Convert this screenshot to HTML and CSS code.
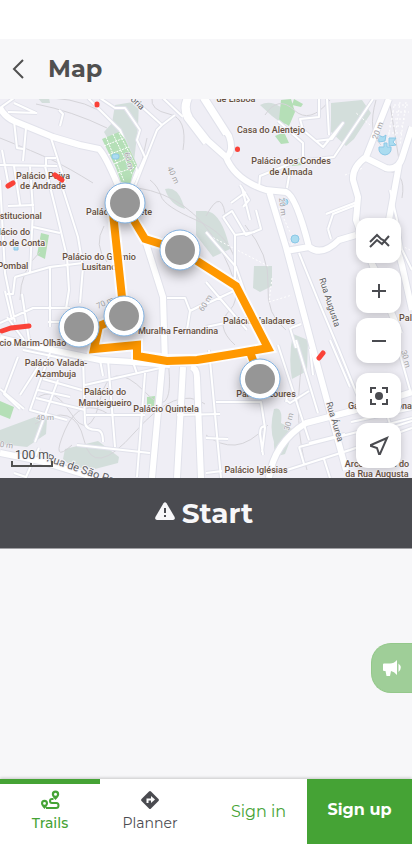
FILE: index.html
```html
<!DOCTYPE html>
<html lang="en">
<head>
<meta charset="utf-8">
<meta name="viewport" content="width=device-width, initial-scale=1">
<title>Map</title>
<link rel="stylesheet" href="styles.css">
</head>
<body>
<header class="header">
  <button class="back" aria-label="Back"><svg viewBox="0 0 12 20" width="12" height="20"><path d="M11 1 2 10l9 9"/></svg></button>
  <h1>Map</h1>
</header>
<main>
  <section class="map">
    <svg class="canvas" viewBox="0 99 412 379" role="img" aria-label="Trail map">
      <defs>
        <g id="minor">
          <path d="M0 108 14 98M8 112 37 113M14 103 36 113M59 110 63 114 60 126M14 121 17 148 23 149M26 128 23 161M51 138 65 182M0 165 57 166M46 166V158H56M14 166 20 205M30 166 33 210 30 273M2 150 8 182M45 166 57 215 67 257 69 290 66 309M60 180 78 237 83 267 80 303M0 180 5 273 15 322M8 206 34 205M33 227 60 233M15 277 50 267 83 263M15 277 13 294 7 294M50 267V327M0 323 33 308 70 308M22 294 29 340M5 291 12 320M48 322H80"/>
          <path d="M88 98 120 130 137 170 130 188M100 98 115 108H125L140 130 137 140 145 157 132 186M132 98 162 125 175 115M162 125 157 130 135 186M163 98 183 117M120 190 145 240M167 298H185L190 311 206 303M190 311 187 330M206 232 236 267 244 290M223 217 235 235 255 232M223 217 232 211 246 235 261 229 256 210M235 235V279M206 282 247 330M206 304 236 290M206 327 225 323"/>
          <path d="M373 99 334 157 297 161 260 176 259 188M319 99V117L300 119 303 130 323 147 343 123 332 139 316 141M327 99 329 135M278 121 303 143V159M290 170 287 188M242 188 250 220M246 192 231 203M240 185 249 200 243 207M328 229 333 214 356 205M328 229 331 239M326 214 357 202M299 253 318 300 339 350 360 402M390 190 397 220 402 250M366 250 385 283M395 235 412 270"/>
          <path d="M83 357 85 423Q86 430 97 430 103 430 103 442M108 360 115 447M145 373 137 477M77 445 150 453M85 385 160 368M36 398 85 410M86 415H145M50 353 30 410 67 420M58 380 35 442M18 357 4 394 20 409M20 395 43 359M38 390 70 397M43 379 82 390M23 350 85 363M133 362 137 374M100 360 103 376M7 317 24 340M0 389 24 409M14 473 26 477 39 448"/>
          <path d="M209 350 221 478M216 402H261L265 428 262 452M265 427Q260 425 260 434L263 455M278 345 309 440M296 340 318 413M286 400 290 403 309 391M286 402 287 396M299 447 412 418M287 470 350 450 412 428M299 447 304 464M324 459 330 478M309 443 345 434M310 349 313 375M290 328 296 348M291 328 301 324M206 438 228 439M206 473 222 471M384 430 412 421M351 422 412 409M384 405 395 440M177 415 220 414M330 340 350 387M397 344 410 390"/>
        </g>
        <g id="major">
          <path d="M0 108Q5 117 14 121L53 137 80 145 99 149Q105 155 117 183L124 203 145 240"/>
          <path d="M189 98Q184 108 190 118L208 141 226 157Q235 180 266 190L286 192Q296 196 309 247Q322 257 339 240L356 235M187 98Q182 108 187 118L206 143M206 100 229 136Q234 150 227 157M203 98 226 134M269 191 286 247 316 360 346 470M286 251 309 247"/>
          <path d="M389 99 366 157Q352 167 353 180L358 197 356 220 378 280 400 334M366 158 386 168Q399 171 403 155L412 127M399 165 389 220 402 265 412 310"/>
          <path d="M0 338 37 347 100 360 133 362 170 365M145 240 163 297 165 364M162 367 152 478M183 367 177 478M191 367Q197 368 197 378L201 478M0 453 40 461 96 478M269 478Q274 443 306 423L356 410 412 392"/>
        </g>
      </defs>
      <rect y="99" width="412" height="379" fill="#efeef5"/>
      <g class="woods">
        <path d="M115 105 139 101 138 127 133 170 117 155 104 132 112 123Z"/>
        <path d="M331 103 362 100 371 113 354 139 346 146 331 132ZM260 105Q275 97 292 118L284 125 272 116Z"/>
        <path d="M165 189Q176 186 182 201L185 209Q170 205 165 189ZM196 211H206Q219 212 227 238L230 249 213 257 196 235Z"/>
        <path d="M254 266H272V286L260 292 253 288ZM293 334 308 340 307 371 292 379Q288 358 293 334ZM274 409Q283 406 281 423L294 430 285 454Q273 459 274 442 269 428 274 409Z"/>
        <path d="M0 430 35 417 47 419 46 434 27 447 0 444ZM65 449 98 441 119 457 118 463 95 469 72 467 63 459ZM38 98H49L50 103 42 103Z"/>
      </g>
      <g class="parks"><path d="M281 100 291 99 295 112 289 126 279 120ZM294 99 303 104 301 107 292 105ZM275 136 284 132 289 143 281 144ZM290 161 299 158 302 165 292 166Z"/><path d="M41 233 49 235 45 259 37 255ZM0 401 14 407 10 419 0 415ZM147 397 155 396 154 408 147 407Z"/></g>
      <path class="contours" d="M52 98Q88 100 110 118M36 104Q72 111 107 128M0 138Q35 152 52 160T93 183M152 98Q150 110 169 114T183 150M147 138 140 170M150 180Q158 186 161 196T196 220 235 260 245 290M138 188Q190 196 218 245T230 310 235 345M245 225Q270 255 268 285T286 330M104 226Q93 245 107 262M40 252Q20 270 20 300M30 405Q50 380 70 412T100 400 145 392 165 340M35 424Q75 400 84 440T135 432 205 404M302 362Q293 425 307 470M206 435Q220 446 235 445T268 425M265 115Q278 95 294 110T330 100M376 100Q367 132 381 145M390 104 399 160M384 171Q407 170 402 198M206 216Q223 184 226 222M110 415Q80 395 65 430T72 445"/>
      <path class="dots" d="M389 126H404M391 119H407M392 112H409M394 105H410M388 133H402M394 106 388 140M400 102 394 143M406 102 400 145M206 234 270 267M272 278 269 302 292 295M279 208 290 232M282 236 294 246M355 222 410 250M345 175 363 168M370 125 355 112"/>
      <use href="#minor" class="minor-case"/><use href="#major" class="major-case"/>
      <use href="#minor" class="minor"/><use href="#major" class="major"/>
      <g class="parks"><path d="M102 139 119 132 125 139 137 165 133 173 130 184 121 182 116 168Z"/></g>
      <g class="stroll"><path d="M106 137 124 181M113 134 132 174M119 133 136 166M104 146 124 138M108 155 129 147M114 164 132 156M118 173 135 167"/></g>
      <g class="water"><circle cx="295" cy="239" r="4"/><circle cx="285" cy="202" r="3"/><rect x="112" y="154" width="7" height="5" rx="2"/><path d="M379 147H384V143H387V147H391Q392 154 385 155 378 154 379 147ZM378 135 383 137 386 135 385 141 379 142ZM389 138 396 138 393 142 396 145 389 146ZM14 245H18V250H14Z"/></g>

      <g class="roads-text">
        <text transform="translate(130 100) rotate(43)">ória</text>
        <text transform="translate(319 279) rotate(72)">Rua Augusta</text>
        <text transform="translate(326 403) rotate(73)">Rua Áurea</text>
        <text class="wide" transform="translate(46 461) rotate(19)">Rua de São Paulo</text>
      </g>
      <g class="elev">
        <text transform="translate(124 153) rotate(75)">60 m</text><text transform="translate(167 168) rotate(65)">40 m</text>
        <text transform="translate(377 140) rotate(-68)">20 m</text><text transform="translate(279 198) rotate(83)">20 m</text>
        <text transform="translate(203 312) rotate(-58)">60 m</text><text transform="translate(36 420)">40 m</text><text transform="translate(98 309) rotate(-25)">70 m</text>
        <text transform="translate(289 431) rotate(-75)">30 m</text><text transform="translate(401 351) rotate(75)">30 m</text><text transform="translate(-5 446) rotate(8)">20 m</text>
      </g>
      <g class="places">
        <text x="236" y="102">de Lisboa</text><text x="271" y="133">Casa do Alentejo</text>
        <text x="291" y="164">Palácio dos Condes</text><text x="291" y="175">de Almada</text>
        <text x="43" y="179">Palácio Paiva</text><text x="43" y="189">de Andrade</text>
        <text x="119" y="215">Palácio Alegrete</text>
        <text x="17" y="219">Institucional</text><text x="9" y="235">Palácio do</text><text x="8" y="246">Sobrinho de Conta</text><text x="13" y="269">Pombal</text>
        <text x="99" y="260">Palácio do Grémio</text><text x="99" y="270">Lusitano</text>
        <text x="178" y="334">Muralha Fernandina</text><text x="259" y="324">Palácio Valadares</text>
        <text x="24" y="346">Palácio Marim-Olhão</text><text x="56" y="366">Palácio Valada-</text><text x="56" y="377">Azambuja</text>
        <text x="105" y="395">Palácio do</text><text x="105" y="406">Manteigueiro</text><text x="166" y="412">Palácio Quintela</text>
        <text x="266" y="397">Palácio Loures</text><text x="256" y="473">Palácio Iglésias</text>
        <text x="381" y="409">Galeria Nacional</text><text x="377" y="467">Arco Triunfal do</text><text x="377" y="477">da Rua Augusta</text><text x="414" y="321">Palácio</text>
      </g>
      <g class="halo"><path d="M124 204 145 239 180 250 236 286 268 348 197 360H167L137 356V345L94 349 99 326 124 316 112 204M250 350 260 379"/></g>
      <g class="route"><path d="M124 204 145 239 180 250 236 286 268 348Q230 355 197 360L167 361 137 356V345L94 349 99 326 124 316 112 204M250 352 260 379"/></g>
      <path class="alerts" d="M97 104V105M237.500 149V149.500M8 186 13 183M55 175 62 180M2 331 11 328 29 326M319 358 323 353"/>
      <g class="markers">
        <g><circle class="rim" cx="260" cy="379" r="20"/><circle class="dot" cx="260" cy="379" r="15"/></g>
        <g><circle class="rim" cx="79" cy="327" r="20"/><circle class="dot" cx="79" cy="327" r="15"/></g>
        <g><circle class="rim" cx="124" cy="316" r="20"/><circle class="dot" cx="124" cy="316" r="15"/></g>
        <g><circle class="rim" cx="180" cy="250" r="20"/><circle class="dot" cx="180" cy="250" r="15"/></g>
        <g><circle class="rim" cx="125" cy="203" r="20"/><circle class="dot" cx="125" cy="203" r="15"/></g>
      </g>
      <text class="scale" x="15" y="459">100 m</text>
      <path class="ruler" d="M12 461V466H52V461M31 463V466"/>
    </svg>
    <div class="controls">
      <button aria-label="Elevation"><svg viewBox="0 0 24 24"><path d="m3 13 7-7 4 4q3 1 4 3l4 4M3 18l7-7 5 4 7-8"/></svg></button>
      <button aria-label="Zoom in"><svg viewBox="0 0 24 24"><path d="M12 5v14M5 12h14"/></svg></button>
      <button aria-label="Zoom out"><svg viewBox="0 0 24 24"><path d="M5 12h14"/></svg></button>
      <button class="spaced" aria-label="Fit trail"><svg viewBox="0 0 24 24"><path d="M4 9V4h5M15 4h5v5M20 15v5h-5M9 20H4v-5"/><circle cx="12" cy="12" r="4" fill="currentColor" stroke="none"/></svg></button>
      <button aria-label="My location"><svg viewBox="0 0 24 24"><path d="M20 4 4 11v1l6 2 2 6h1Z"/></svg></button>
    </div>
  </section>
  <button class="start"><svg viewBox="0 0 20 18" width="20" height="18"><path fill="#f7f7f9" d="M8.500 1.200Q10-.8 11.500 1.200L19.600 15Q20.300 17.700 18 18H2Q-.3 17.700.4 15Z"/><path d="M10 6v5M10 13v2" stroke="#4a4b50" stroke-width="2"/></svg>Start</button>
</main>
<button class="feedback" aria-label="Announcements"><svg viewBox="0 0 20 18" width="20" height="18"><path fill="#fff" d="M2 4.500h6q4 0 7-3.500v15q-3-3.500-6-4l-1 5H4.500l-1-5H2Q1 12 1 11V5.500Q1 4.500 2 4.500ZM16.500 4.500q4.500 4 0 8.500Z"/></svg></button>
<nav class="nav">
  <a class="tab active" href="#trails"><svg viewBox="0 0 20 20" width="20" height="20"><path fill="currentColor" fill-rule="evenodd" d="M15.500 10Q11.800 6.500 11.800 4.300a3.700 3.700 0 0 1 7.400 0Q19.200 6.500 15.500 10ZM15.500 2.800a1.500 1.500 0 1 0 0 3 1.500 1.500 0 0 0 0-3ZM4.500 19Q1 15.500 1 13.300a3.500 3.500 0 0 1 7 0Q8 15.500 4.500 19ZM4.500 12a1.400 1.400 0 1 0 0 2.800 1.400 1.400 0 0 0 0-2.800Z"/><path fill="none" stroke="currentColor" stroke-width="2" d="M13.500 9H12Q10 9 10 11T12 13H16.500Q18.500 13 18.500 15.500T16 18H6"/></svg><span>Trails</span></a>
  <a class="tab" href="#planner"><svg viewBox="0 0 20 20" width="20" height="20"><path fill="#4a4b50" d="M9 1.500Q10 .5 11 1.500L18.500 9Q19.500 10 18.500 11L11 18.500Q10 19.500 9 18.500L1.500 11Q.5 10 1.500 9Z"/><path d="M7.500 13V9.500H12" fill="none" stroke="#fff" stroke-width="2"/><path fill="#fff" d="m11 6 4 3.500-4 3.500Z"/></svg><span>Planner</span></a>
  <a class="signin" href="#signin">Sign in</a>
  <a class="signup" href="#signup">Sign up</a>
</nav>
</body>
</html>
```
FILE: styles.css
```css
* { box-sizing: border-box; }
body {
  margin: 0;
  padding-top: 39px;
  min-height: 100vh;
  display: flex;
  flex-direction: column;
  background: linear-gradient(#fff 39px, #f7f7f9 39px);
  color: #4a4b50;
  font-family: Montserrat, Inter, sans-serif;
}
button { border: 0; padding: 0; font: inherit; color: inherit; display: flex; align-items: center; justify-content: center; }
a { text-decoration: none; color: inherit; }
.header { height: 60px; display: flex; align-items: center; gap: 12px; }
.header h1 { margin: 0; font-size: 24px; line-height: 32px; font-weight: 700; color: #505050; }
.back { width: 36px; height: 44px; background: none; }
.back path { fill: none; stroke: #505050; stroke-width: 2; }
main { flex: 1; }
.map { position: relative; overflow: hidden; }
.canvas { display: block; width: 100%; height: auto; }
.woods { fill: #d3dedb; }
.parks { fill: #b5dfb7; }
.contours { fill: none; stroke: #d5d4d9; stroke-width: 1; }
.dots { fill: none; stroke: #fff; stroke-width: 1; stroke-dasharray: 2 2; }
.stroll { fill: none; stroke: #fff; stroke-width: 1; stroke-dasharray: 2 1; }
.minor-case, .major-case, .minor, .major { fill: none; stroke-linejoin: round; }
.minor-case { stroke: #e1e2eb; stroke-width: 4; }
.major-case { stroke: #e1e2eb; stroke-width: 8; }
.minor { stroke: #fff; stroke-width: 2; }
.major { stroke: #fff; stroke-width: 6; }
.water { fill: #abdcf0; stroke: #8bc8e6; stroke-width: 1; }
.canvas text { font-family: "Liberation Sans Narrow", Roboto, sans-serif; paint-order: stroke; stroke: #f5f4f8; stroke-width: 2px; stroke-linejoin: round; }
.places text { font-size: 9px; font-weight: 500; fill: #66503f; text-anchor: middle; }
.roads-text text { font-size: 9px; fill: #5e5e62; }
.roads-text .wide { font-size: 11px; }
.elev text { font-size: 8px; fill: #a2a2a5; stroke-width: 1px; }
.halo path { fill: none; stroke: #fff; stroke-width: 12; stroke-opacity: .85; }
.route path { fill: none; stroke: #ff9800; stroke-width: 8; }
.alerts { fill: none; stroke: #fa4238; stroke-width: 5; stroke-linecap: round; }
.markers g { filter: drop-shadow(0 5px 6px rgba(0, 0, 0, .35)); }
.rim { fill: #fff; stroke: #80b0df; stroke-width: 1; }
.dot { fill: #969696; }
.canvas .scale { font-family: Roboto, sans-serif; font-size: 12px; fill: #505050; }
.ruler { fill: none; stroke: #505050; stroke-width: 2; }
.controls { position: absolute; right: 11px; bottom: 10px; display: flex; flex-direction: column; gap: 5px; }
.controls button { width: 45px; height: 45px; border-radius: 12px; background: #fff; box-shadow: 0 2px 8px rgba(0, 0, 0, .2); }
.controls .spaced { margin-top: 5px; }
.controls svg { width: 24px; height: 24px; fill: none; stroke: currentColor; stroke-width: 2; }
.start { width: 100%; height: 71px; padding-right: 4px; gap: 7px; background: #4a4b50; color: #f7f7f9; font-size: 28px; font-weight: 700; border-bottom: 1px solid #a0a0a4; }
.start svg { margin-bottom: 4px; }
.feedback { position: fixed; right: 0; bottom: 151px; width: 41px; height: 50px; border-radius: 20px 0 0 20px; background: #9fce98; border: 1px solid #94c88b; border-right: 0; }
.nav { display: grid; grid-template-columns: 100fr 100fr 107fr 105fr; height: 65px; background: #fff; box-shadow: 0 -1px 3px rgba(0, 0, 0, .2); }
.tab { border-top: 5px solid transparent; padding-top: 6px; display: flex; flex-direction: column; align-items: center; gap: 4px; font-size: 14px; line-height: 18px; }
.active { border-color: #45a335; color: #45a335; font-weight: 500; }
.signin, .signup { display: flex; align-items: center; justify-content: center; font-size: 16px; }
.signin { padding-left: 10px; color: #45a335; font-weight: 400; }
.signup { background: #45a335; color: #fff; font-weight: 700; padding-bottom: 4px; }
```
